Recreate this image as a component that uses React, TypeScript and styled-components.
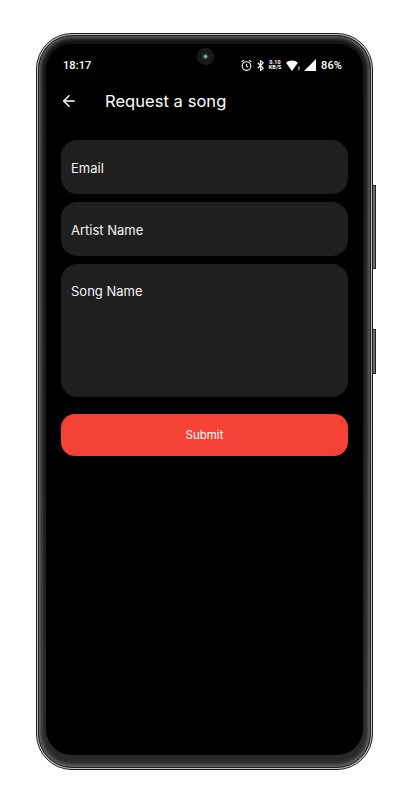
import React from 'react';
import styled, { createGlobalStyle } from 'styled-components';
import { ArrowLeft } from 'lucide-react';

const GlobalStyle = createGlobalStyle`
  html, body {
    margin: 0;
    background: #ffffff;
    font-family: "Inter", "Liberation Sans", sans-serif;
  }
`;

const Page = styled.div`
  width: 409px;
  height: 800px;
  padding: 33px 0 0 36px;
  box-sizing: border-box;
  overflow: hidden;
`;

const Phone = styled.div`
  position: relative;
  width: 337px;
  height: 737px;
  box-sizing: border-box;
  padding: 1px;
  border-radius: 36px;
  background: #c4c4c4;
  border: 1px solid #1c1c1c;
`;

const SideButton = styled.div<{ $top: number; $height: number }>`
  position: absolute;
  right: -4px;
  top: ${({ $top }) => $top}px;
  width: 3px;
  height: ${({ $height }) => $height}px;
  background: #6a6a6a;
  border: solid #222;
  border-width: 1px 1px 1px 0;
  box-sizing: border-box;
`;

const Bezel = styled.div`
  height: 100%;
  box-sizing: border-box;
  border-radius: 34px;
  padding: 8px 7px 12px 7px;
  border: 1px solid #1e1e1e;
  background: linear-gradient(180deg, #141414 0%, #1c1c1c 60%, #2a2a2a 100%);
  box-shadow: inset 0 0 5px 1px #8a8a8a;
`;

const Screen = styled.div`
  position: relative;
  height: 100%;
  background: #000000;
  border-radius: 26px;
  box-sizing: border-box;
  color: #ffffff;
`;

const Camera = styled.div`
  position: absolute;
  top: 4px;
  left: 151px;
  width: 17px;
  height: 17px;
  border-radius: 50%;
  background: radial-gradient(circle, #86b0a8 0 1px, #1c2a2a 2.5px, #141414 5px, #2a2a2a 100%);
`;

const StatusBar = styled.div`
  display: flex;
  align-items: center;
  justify-content: space-between;
  height: 16px;
  padding: 13px 21px 0 17px;
  font-family: Roboto, sans-serif;
  font-size: 11px;
  font-weight: 500;
  letter-spacing: 0.1px;
`;

const StatusIcons = styled.div`
  display: flex;
  align-items: center;
  gap: 4px;
`;

const NetSpeed = styled.div`
  font-size: 5.5px;
  line-height: 5.5px;
  font-weight: 700;
  text-align: center;
  width: 14px;
`;

const Battery = styled.span`
  margin-left: 1px;
`;

const AppBar = styled.div`
  display: flex;
  align-items: center;
  height: 36px;
  margin-top: 10px;
  padding-left: 14px;
`;

const BackButton = styled.div`
  display: flex;
  width: 45px;
`;

const Title = styled.h1`
  margin: 0;
  font-size: 16.5px;
  font-weight: 400;
  letter-spacing: 0.05px;
`;

const Form = styled.div`
  display: flex;
  flex-direction: column;
  gap: 8px;
  margin-top: 21px;
  padding: 0 15px;
`;

const Field = styled.div<{ $tall?: boolean }>`
  box-sizing: border-box;
  height: ${({ $tall }) => ($tall ? '133px' : '54px')};
  padding: ${({ $tall }) => ($tall ? '19px' : '1px')} 10px 0;
  display: flex;
  align-items: ${({ $tall }) => ($tall ? 'flex-start' : 'center')};
  background: #1f1f1f;
  border-radius: 16px;
  font-size: 13px;
  line-height: 16px;
  font-weight: 400;
  color: #f5f5f5;
`;

const SubmitButton = styled.button`
  height: 42px;
  margin-top: 9px;
  border: 0;
  border-radius: 14px;
  background: #f44336;
  color: #ffffff;
  font-family: "Inter", sans-serif;
  font-size: 11.5px;
  font-weight: 400;
`;

const App = () => (
  <Page>
    <GlobalStyle />
    <Phone>
      <SideButton $top={151} $height={84} />
      <SideButton $top={295} $height={45} />
      <Bezel>
        <Screen>
          <Camera />
          <StatusBar>
            <span>18:17</span>
            <StatusIcons>
              <svg width="13" height="13" viewBox="0 0 24 24" fill="none" stroke="#fff" strokeWidth="2">
                <circle cx="12" cy="13" r="8" />
                <path d="M12 9v4l3 2M3 5l4-3M21 5l-4-3" />
              </svg>
              <svg width="7" height="11" viewBox="0 0 12 20" fill="none" stroke="#fff" strokeWidth="2">
                <path d="M1 5l10 10-5 4V1l5 4L1 15" />
              </svg>
              <NetSpeed>
                0.10
                <br />
                KB/S
              </NetSpeed>
              <svg width="14" height="11" viewBox="0 0 26 20" fill="#fff">
                <path d="M0 5C6-1 16-1 22 5L11 20z" />
                <path d="M23 12h2v4h-2zM23 17h2v2h-2z" />
              </svg>
              <svg width="12" height="12" viewBox="0 0 12 12" fill="#fff">
                <path d="M12 0v12H0z" />
              </svg>
              <Battery>86%</Battery>
            </StatusIcons>
          </StatusBar>
          <AppBar>
            <BackButton>
              <ArrowLeft size={18} strokeWidth={2} color="#fff" />
            </BackButton>
            <Title>Request a song</Title>
          </AppBar>
          <Form>
            <Field>Email</Field>
            <Field>Artist Name</Field>
            <Field $tall>Song Name</Field>
            <SubmitButton>Submit</SubmitButton>
          </Form>
        </Screen>
      </Bezel>
    </Phone>
  </Page>
);

export default App;
